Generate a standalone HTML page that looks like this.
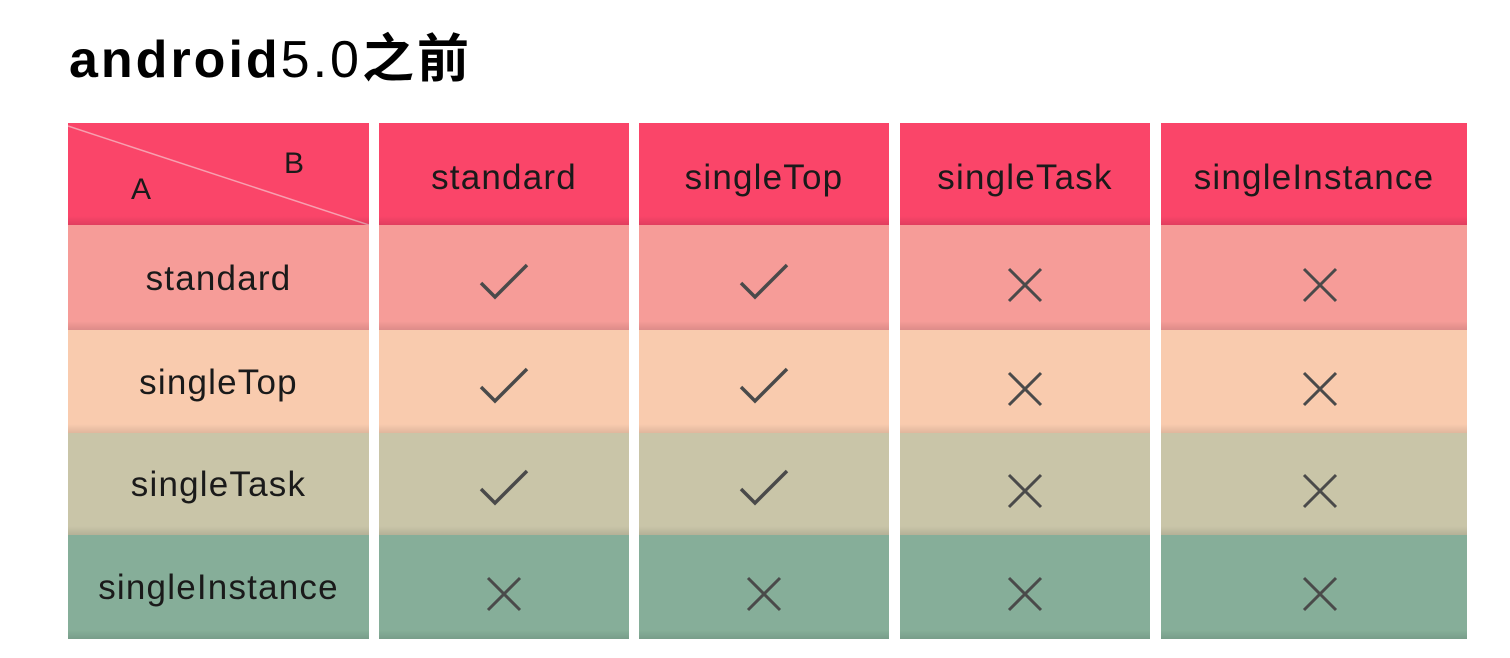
<!DOCTYPE html>
<html><head><meta charset="utf-8"><style>
body{margin:0;width:1510px;height:658px;background:#fff;position:relative;overflow:hidden;font-family:"Liberation Sans","Noto Sans CJK SC",sans-serif}
.t{position:absolute;left:69px;top:28px;font-size:52px;letter-spacing:3px;line-height:64px;color:#000;white-space:nowrap}
.c{position:absolute;display:flex;align-items:center;justify-content:center;font-size:35px;letter-spacing:1.2px;color:#1a1a1a}
.c::after{content:"";position:absolute;left:0;right:0;bottom:0;height:9px;background:linear-gradient(rgba(0,0,0,0),rgba(0,0,0,0.1))}
svg{position:relative}
</style></head><body>
<div class="t"><b>android</b>5.0<b>之前</b></div>
<div id="g"></div>
<script>
var cols=[[68,369],[379,629],[639,889],[900,1150],[1161,1467]];
var rows=[[123,225],[225,330],[330,433],[433,535],[535,639]];
var bg=["#fa4569","#f69c98","#f9cbae","#c9c5a8","#86ae99"];
var names=["standard","singleTop","singleTask","singleInstance"];
var M=[[1,1,0,0],[1,1,0,0],[1,1,0,0],[0,0,0,0]];
var h="";
var ck='<svg width="52" height="40" viewBox="0 0 52 40" style="top:3px"><path d="M3 22 L17 36 L49 4" fill="none" stroke="#4a4a4a" stroke-width="3.5"/></svg>';
var x='<svg width="38" height="38" viewBox="0 0 38 38" style="top:7px"><path d="M3 3L35 35M35 3L3 35" fill="none" stroke="#4a4a4a" stroke-width="3"/></svg>';
for(var r=0;r<5;r++)for(var c=0;c<5;c++){
 var st="left:"+cols[c][0]+"px;width:"+(cols[c][1]-cols[c][0])+"px;top:"+rows[r][0]+"px;height:"+(rows[r][1]-rows[r][0])+"px;background:"+bg[r];
 var inner="";
 if(r==0&&c==0){inner='<svg width="301" height="102" style="position:absolute;left:0;top:0"><line x1="0" y1="3" x2="301" y2="102" stroke="#f7a0b0" stroke-width="1.5"/></svg><span style="position:absolute;left:63px;top:50px;font-size:30px">A</span><span style="position:absolute;left:216px;top:24px;font-size:30px">B</span>';}
 else if(r==0){inner='<span style="margin-top:8px">'+names[c-1]+'</span>';}
 else if(c==0){inner='<span style="margin-top:2px">'+names[r-1]+'</span>';}
 else inner='<span style="display:flex;'+(c==4?'margin-left:12px':'')+'">'+(M[r-1][c-1]?ck:x)+'</span>';
 h+='<div class="c" style="'+st+'">'+inner+'</div>';
}
document.getElementById("g").innerHTML=h;
</script>
</body></html>
